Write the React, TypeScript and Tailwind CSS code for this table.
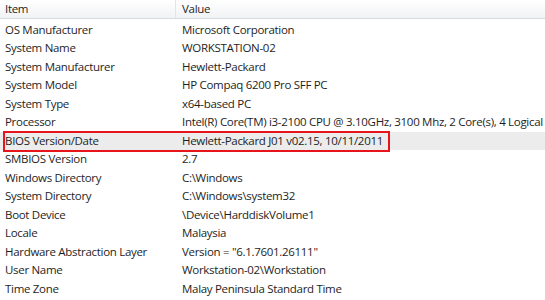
const rows: [string, string][] = [
  ["OS Manufacturer", "Microsoft Corporation"],
  ["System Name", "WORKSTATION-02"],
  ["System Manufacturer", "Hewlett-Packard"],
  ["System Model", "HP Compaq 6200 Pro SFF PC"],
  ["System Type", "x64-based PC"],
  ["Processor", "Intel(R) Core(TM) i3-2100 CPU @ 3.10GHz, 3100 Mhz, 2 Core(s), 4 Logical Processor(s)"],
  ["BIOS Version/Date", "Hewlett-Packard J01 v02.15, 10/11/2011"],
  ["SMBIOS Version", "2.7"],
  ["Windows Directory", "C:\\Windows"],
  ["System Directory", "C:\\Windows\\system32"],
  ["Boot Device", "\\Device\\HarddiskVolume1"],
  ["Locale", "Malaysia"],
  ["Hardware Abstraction Layer", 'Version = "6.1.7601.26111"'],
  ["User Name", "Workstation-02\\Workstation"],
  ["Time Zone", "Malay Peninsula Standard Time"],
];

export default function App() {
  return (
    <div className="w-[545px] h-[300px] overflow-hidden bg-white text-[11.5px] text-[#1e1e1e] font-['Open_Sans',sans-serif] tracking-[-0.3px]">
      {/* header */}
      <div className="flex h-[19px] bg-gradient-to-b from-white to-[#f1f2f4] border-b border-[#d9dadc] leading-[18px]">
        <div className="w-[176px] shrink-0 pl-[5px] border-r border-[#e3e4e6]">Item</div>
        <div className="pl-[6px]">Value</div>
      </div>

      <div className="pt-[1.5px]">
        {rows.map(([k, v]) => {
          const sel = k === "BIOS Version/Date";
          return (
            <div key={k} className={sel ? "relative flex h-[18.5px] leading-[18.5px] bg-[#ececec] whitespace-nowrap" : "flex h-[18.5px] leading-[18.5px] whitespace-nowrap"}>
              <div className="w-[176px] shrink-0 pl-[5px]">{k}</div>
              <div className="pl-[6px]">{v}</div>
              {sel && <div className="absolute left-[3px] top-[-1px] w-[387px] h-[21px] border-2 border-[#e8141b]" />}
            </div>
          );
        })}
      </div>
    </div>
  );
}
